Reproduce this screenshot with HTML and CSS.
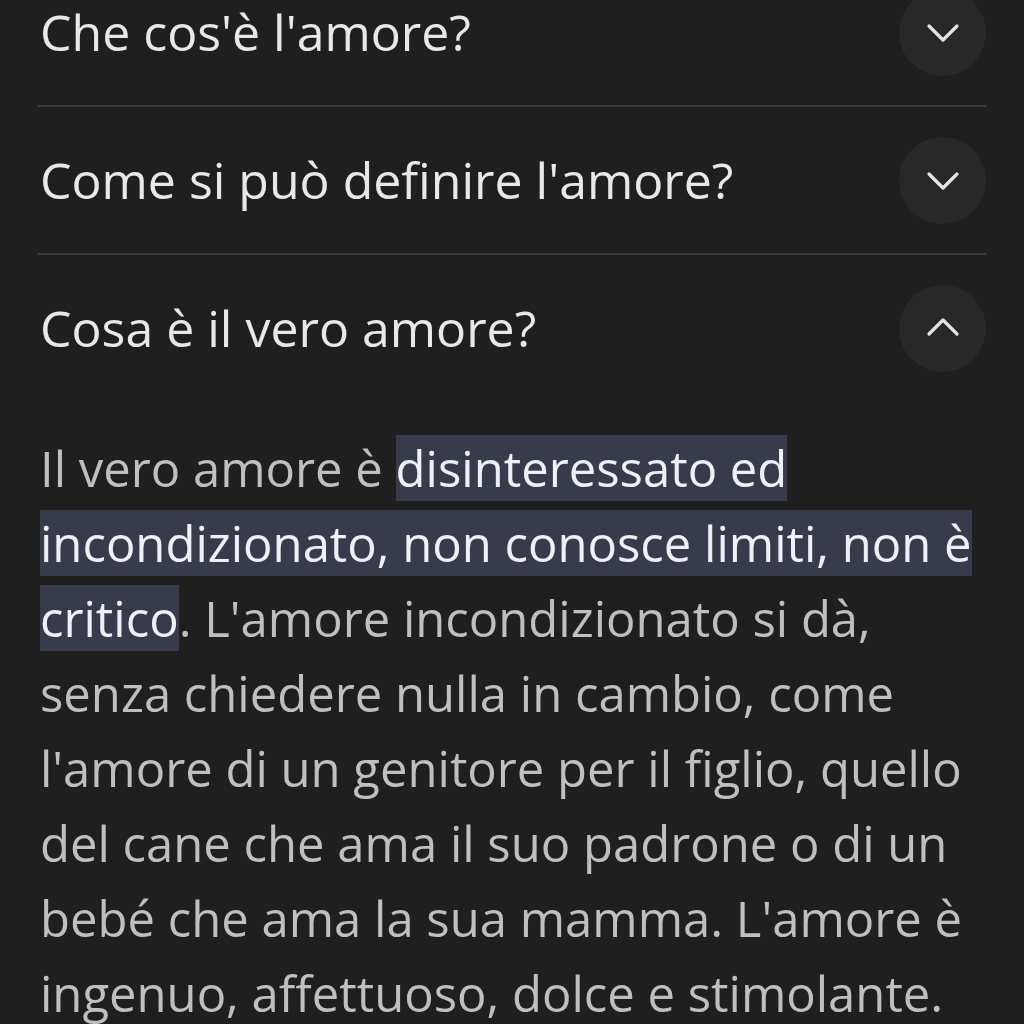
FILE: index.html
```html
<!DOCTYPE html>
<html lang="it">
<head>
    <meta charset="UTF-8">
    <meta name="viewport" content="width=device-width, initial-scale=1.0">
    <title>Domande correlate</title>
    <link rel="stylesheet" href="styles.css">
</head>
<body>
    <div class="questions">
        <div class="question">
            <span class="question-text">Che cos'è l'amore?</span>
            <span class="toggle">
                <svg viewBox="0 0 24 24" width="48" height="48"><path d="M5 9l7 7 7-7"/></svg>
            </span>
        </div>
        <div class="question">
            <span class="question-text">Come si può definire l'amore?</span>
            <span class="toggle">
                <svg viewBox="0 0 24 24" width="48" height="48"><path d="M5 9l7 7 7-7"/></svg>
            </span>
        </div>
        <div class="question open">
            <span class="question-text">Cosa è il vero amore?</span>
            <span class="toggle">
                <svg viewBox="0 0 24 24" width="48" height="48"><path d="M5 15l7-7 7 7"/></svg>
            </span>
        </div>
        <p class="answer">Il vero amore è <span class="mark">disinteressato ed incondizionato, non conosce limiti, non è critico</span>. L'amore incondizionato si dà, senza chiedere nulla in cambio, come l'amore di un genitore per il figlio, quello del cane che ama il suo padrone o di un bebé che ama la sua mamma. L'amore è ingenuo, affettuoso, dolce e stimolante.</p>
    </div>
</body>
</html>
```

FILE: styles.css
```css
body {
    margin: 0;
    background-color: #1f1f1f;
    font-family: "Open Sans", Roboto, sans-serif;
    overflow: hidden;
}

.questions {
    width: 948px;
    margin: -41px 0 0 38px;
}

.question {
    display: flex;
    align-items: center;
    justify-content: space-between;
    height: 146px;
    border-bottom: 2px solid #3c3c3c;
}

.question.open {
    border-bottom: none;
}

.question-text {
    padding-left: 2px;
    font-size: 50px;
    color: #e8e8e8;
}

.toggle {
    display: flex;
    align-items: center;
    justify-content: center;
    width: 87px;
    height: 87px;
    border-radius: 50%;
    background-color: #282828;
}

.toggle svg path {
    fill: none;
    stroke: #e3e3e3;
    stroke-width: 1.6;
    stroke-linecap: round;
    stroke-linejoin: round;
}

.answer {
    margin: 0;
    padding: 30px 0 0 2px;
    font-size: 49px;
    line-height: 75px;
    color: #bfbfbf;
}

.mark {
    background-color: #383b4b;
    color: #eef0f6;
    font-weight: 500;
}
```
